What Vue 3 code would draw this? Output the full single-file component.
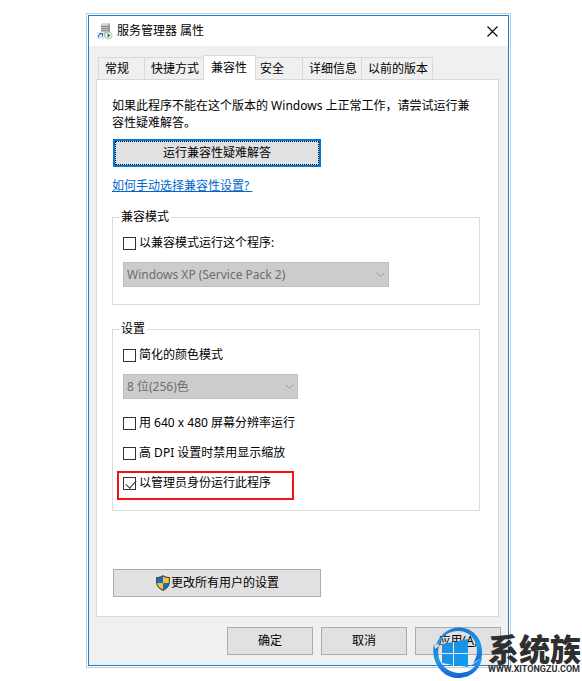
<script setup>
import { ref } from 'vue'

const tabs = ['常规', '快捷方式', '兼容性', '安全', '详细信息', '以前的版本']
const activeTab = ref('兼容性')

const compatMode = ref(false)
const reducedColor = ref(false)
const lowResolution = ref(false)
const disableScaling = ref(false)
const runAsAdmin = ref(true)
</script>

<template>
  <div class="page">
    <main class="frame">
      <div class="dialog">
        <header class="title-bar">
          <svg class="app-icon" viewBox="0 0 16 17" aria-hidden="true">
            <path d="M4 2l2-2h7v12l-2 2H4z" fill="#9a9a9a" />
            <path d="M4 2l2-2h7l-2 2z" fill="#dcdcdc" />
            <path d="M4 2h7v12H4z" fill="#c2c2c2" />
            <path d="M4 3.500h7M4 5.500h7M4 7.500h7" stroke="#8c8c8c" />
            <path d="M0 9h7v7H0z" fill="#dbe9f5" />
            <path d="M1.500 14.500v-2l3-2M2.500 10.500h3v3" fill="none" stroke="#1f62a8" />
            <circle cx="11.500" cy="12.500" r="3.500" fill="#fff" stroke="#a9bfa9" />
            <path d="M10.500 10l3 2.500-3 2.500z" fill="#27852c" />
          </svg>
          <h1 class="title">服务管理器 属性</h1>
          <button type="button" class="close" aria-label="关闭">
            <svg viewBox="0 0 11 11" aria-hidden="true">
              <path d="M.5.5l10 10M10.500.5l-10 10" fill="none" stroke="#000" stroke-width="1.100" />
            </svg>
          </button>
        </header>

        <nav class="tabs" role="tablist">
          <button
            v-for="tab in tabs"
            :key="tab"
            type="button"
            role="tab"
            class="tab"
            :class="{ active: tab === activeTab }"
            :aria-selected="tab === activeTab"
            @click="activeTab = tab"
          >
            {{ tab }}
          </button>
        </nav>

        <section class="panel">
          <p class="intro">如果此程序不能在这个版本的 Windows 上正常工作，请尝试运行兼容性疑难解答。</p>
          <button type="button" class="button wide default">运行兼容性疑难解答</button>
          <a class="help" href="#">如何手动选择兼容性设置?&nbsp;</a>

          <fieldset class="group">
            <legend>兼容模式</legend>
            <label class="check">
              <input v-model="compatMode" type="checkbox" />
              <span>以兼容模式运行这个程序:</span>
            </label>
            <div class="select">
              <select aria-label="兼容模式" :disabled="!compatMode">
                <option>Windows XP (Service Pack 2)</option>
              </select>
              <svg viewBox="0 0 9 6" aria-hidden="true">
                <path d="M.5.5l4 4 4-4" fill="none" stroke="#999" />
              </svg>
            </div>
          </fieldset>

          <fieldset class="group">
            <legend>设置</legend>
            <label class="check">
              <input v-model="reducedColor" type="checkbox" />
              <span>简化的颜色模式</span>
            </label>
            <div class="select short">
              <select aria-label="颜色模式" :disabled="!reducedColor">
                <option>8 位(256)色</option>
              </select>
              <svg viewBox="0 0 9 6" aria-hidden="true">
                <path d="M.5.5l4 4 4-4" fill="none" stroke="#999" />
              </svg>
            </div>
            <div class="options">
              <label class="check">
                <input v-model="lowResolution" type="checkbox" />
                <span>用 640 x 480 屏幕分辨率运行</span>
              </label>
              <label class="check">
                <input v-model="disableScaling" type="checkbox" />
                <span>高 DPI 设置时禁用显示缩放</span>
              </label>
              <label class="check marked">
                <input v-model="runAsAdmin" type="checkbox" />
                <span>以管理员身份运行此程序</span>
              </label>
            </div>
          </fieldset>

          <button type="button" class="button wide all-users">
            <svg class="shield" viewBox="0 0 16 16" aria-hidden="true">
              <path d="M8 0c2 1.500 4 2 7 2v5c0 4-3 7-7 9-4-2-7-5-7-9V2c3 0 5-.5 7-2z" fill="#4a4f55" />
              <path d="M8 1.500V8H2.200V3.100C4.500 3 6.200 2.600 8 1.500z" fill="#0f6cc9" />
              <path d="M8 1.500V8h5.800V3.100C11.500 3 9.800 2.600 8 1.500z" fill="#fdc02f" />
              <path d="M2.200 8H8v6.600C4.700 12.900 2.500 10.800 2.200 8z" fill="#fdc02f" />
              <path d="M13.800 8H8v6.600c3.300-1.700 5.500-3.800 5.800-6.600z" fill="#0f6cc9" />
            </svg>
            <span>更改所有用户的设置</span>
          </button>
        </section>

        <footer class="actions">
          <button type="button" class="button">确定</button>
          <button type="button" class="button">取消</button>
          <button type="button" class="button">应用(<u>A</u>)</button>
        </footer>
      </div>
    </main>

    <div class="watermark">
      <svg class="logo" viewBox="0 0 52 52" aria-hidden="true">
        <defs>
          <linearGradient id="ring" x1="0" y1="0" x2="0" y2="1">
            <stop offset="0" stop-color="#1c78cf" />
            <stop offset=".5" stop-color="#1f9bee" />
            <stop offset="1" stop-color="#1560d0" />
          </linearGradient>
          <linearGradient id="flag" x1="0" y1="0" x2="1" y2="1">
            <stop offset="0" stop-color="#2b87da" />
            <stop offset="1" stop-color="#08a0f4" />
          </linearGradient>
        </defs>
        <path
          d="M4 18C8 7 17 .5 27 .5 40 .5 50 11 50 24c0 3 0 5-1 7l-8 5c3-4 4-8 4-12C45 12 37 4 26 4 17 4 10 9 7 17z"
          fill="url(#ring)"
        />
        <path
          d="M2 17l1 5 4-3c-4 14 6 26 19 27 7 0 13-2 17-7l-3-1 10-8c-1 12-11 21-24 21C10 51-2 34 2 17z"
          fill="url(#ring)"
        />
        <path d="M10 17l11-2v11H10zM22 15l14-3v14H22zM10 27h11v11l-11-2zM22 27h14v13l-14-2z" fill="url(#flag)" />
        <path d="M21.500 15v24M10 26.500h26" stroke="#d9eefb" />
      </svg>
      <div class="brand">
        <strong>系统族</strong>
        <span>WWW.XITONGZU.COM</span>
      </div>
    </div>
  </div>
</template>

<style>
body {
  background: #fff;
}
</style>

<style scoped>
.page {
  position: relative;
  box-sizing: border-box;
  padding: 13px 71px 13px 86px;
  color: #000;
  font-family: "Noto Sans", "Noto Sans CJK SC", sans-serif;
  font-size: 12px;
  line-height: 16px;
}

.page * {
  box-sizing: border-box;
}

button,
select {
  font: inherit;
  color: inherit;
}

.frame {
  padding: 1px;
  border: 1px solid #cdcdcd;
}

.dialog {
  border: 1px solid #1883d7;
  background: #f0f0f0;
}

.title-bar {
  display: flex;
  align-items: center;
  gap: 4px;
  height: 30px;
  padding: 0 10px 0 8px;
  background: #fff;
}

.app-icon {
  width: 16px;
  height: 17px;
}

.title {
  flex: 1;
  margin: 0;
  font-size: 12px;
  font-weight: 400;
}

.close {
  display: flex;
  padding: 0;
  border: 0;
  background: none;
}

.close svg {
  width: 11px;
  height: 11px;
}

/* Вкладки */
.tabs {
  display: flex;
  align-items: flex-end;
  padding: 9px 9px 0;
}

.tab {
  min-width: 46px;
  height: 22px;
  padding: 0 4px 0 6px;
  border: solid #d9d9d9;
  border-width: 1px 0 0 1px;
  background: #f0f0f0;
  text-align: left;
  white-space: nowrap;
}

.tab:last-child {
  border-right-width: 1px;
}

.tab.active {
  position: relative;
  height: 25px;
  margin-bottom: -1px;
  padding: 0 8px 0 7px;
  border-right-width: 1px;
  background: #fff;
}

.tab.active + .tab {
  padding-left: 4px;
  border-left-width: 0;
}

.panel {
  margin: 0 9px 0 7px;
  padding: 17px 18px 19px 15px;
  border: 1px solid #d9d9d9;
  background: #fff;
}

.intro {
  margin: 0 0 8px;
  line-height: 17px;
}

.button {
  display: flex;
  align-items: center;
  justify-content: center;
  width: 86px;
  height: 28px;
  padding: 0;
  border: 1px solid #adadad;
  background: #e1e1e1;
}

.button.wide {
  width: 208px;
  margin-left: 1px;
}

.button.default {
  border: 2px solid #0078d7;
  outline: 1px dotted #000;
  outline-offset: -3px;
}

.all-users {
  margin-top: 58px;
}

.shield {
  width: 16px;
  height: 16px;
}

.help {
  display: block;
  width: fit-content;
  margin-top: 11px;
  color: #0066cc;
  text-decoration: underline;
}

.group {
  min-width: 0;
  margin: 15px 0 0;
  padding: 8px 10px 17px;
  border: 1px solid #dcdcdc;
}

.group + .group {
  margin-top: 16px;
}

.group legend {
  margin-left: -4px;
  padding: 0 2px;
}

.check {
  display: flex;
  align-items: center;
  gap: 3px;
  width: fit-content;
  height: 20px;
}

.check input {
  position: relative;
  width: 13px;
  height: 13px;
  margin: 0;
  border: 1px solid #333;
  background: #fff;
  appearance: none;
}

.check input:checked::after {
  content: "";
  position: absolute;
  top: 0;
  left: 4px;
  width: 5px;
  height: 9px;
  border: solid #333;
  border-width: 0 1px 1px 0;
  transform: rotate(42deg);
}

.select {
  position: relative;
  max-width: 266px;
  margin-top: 9px;
}

.select.short {
  max-width: 175px;
}

.select select {
  display: block;
  width: 100%;
  height: 25px;
  padding: 0 20px 0 3px;
  border: 1px solid #bfbfbf;
  border-radius: 0;
  background: #ccc;
  color: #6d6d6d;
  opacity: 1;
  appearance: none;
}

.select svg {
  position: absolute;
  top: 10px;
  right: 4px;
  width: 9px;
  height: 6px;
}

.options {
  display: grid;
  gap: 10px;
  margin-top: 14px;
}

/* Красная рамка вокруг пункта */
.marked {
  position: relative;
}

.marked::before {
  content: "";
  position: absolute;
  inset: -2px -23px -7px -6px;
  border: 2px solid #f01414;
}

.actions {
  display: flex;
  justify-content: flex-end;
  gap: 8px;
  padding: 10px 7px;
}

/* Логотип поверх окна */
.watermark {
  position: absolute;
  right: 0;
  bottom: 2px;
  display: flex;
  align-items: center;
  gap: 4px;
  color: #2f2f2f;
}

.logo {
  width: 52px;
  height: 52px;
}

.brand {
  display: grid;
  width: 94px;
  white-space: nowrap;
}

.brand strong {
  font-family: "Noto Sans CJK SC", sans-serif;
  font-size: 31px;
  font-weight: 900;
  line-height: 32px;
}

.brand span {
  font-family: Roboto, sans-serif;
  font-size: 9px;
  font-weight: 700;
  line-height: 10px;
}
</style>
